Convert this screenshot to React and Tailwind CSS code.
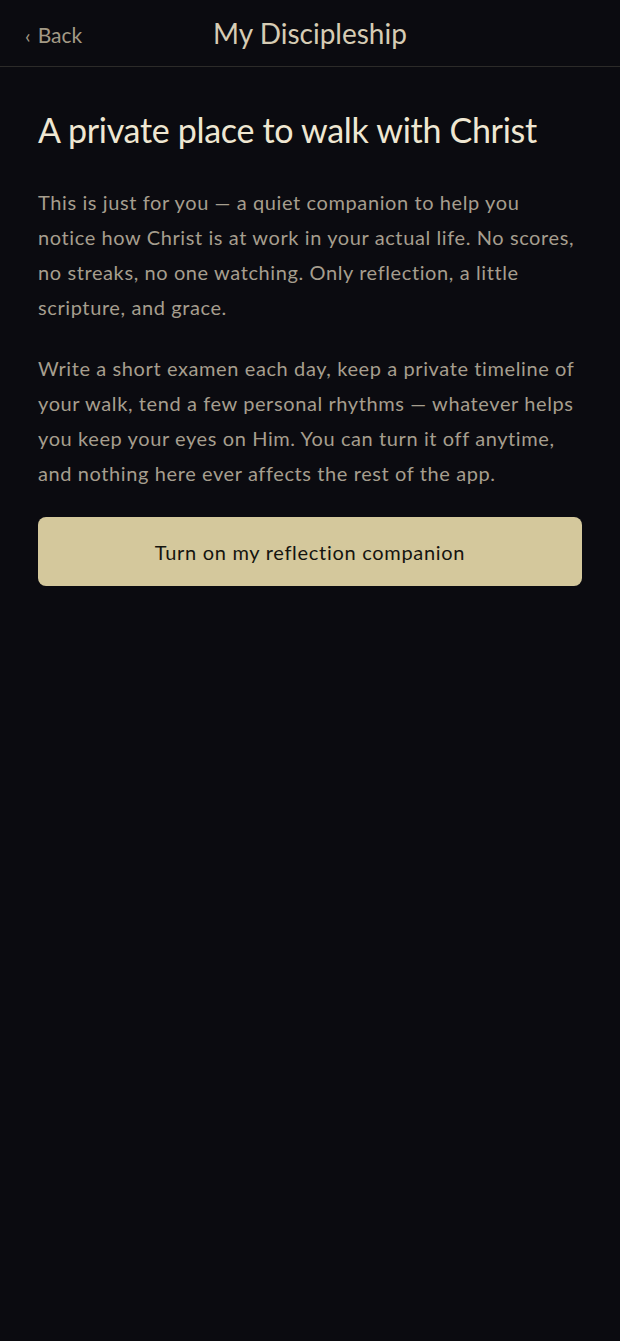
export default function App() {
  const p1 = [
    'This is just for you — a quiet companion to help you',
    'notice how Christ is at work in your actual life. No scores,',
    'no streaks, no one watching. Only reflection, a little',
    'scripture, and grace.',
  ]
  const p2 = [
    'Write a short examen each day, keep a private timeline of',
    'your walk, tend a few personal rhythms — whatever helps',
    'you keep your eyes on Him. You can turn it off anytime,',
    'and nothing here ever affects the rest of the app.',
  ]

  return (
    <div className="min-h-screen bg-[#0b0b10] font-['Lato',sans-serif]">
      {/* Header */}
      <div className="relative h-[67px] flex items-center justify-center border-b border-[#2c2b29]">
        <button className="absolute left-[25px] top-[19px] flex items-center gap-[7px] text-[21px] text-[#a39a86]">
          <span className="text-[20px]">‹</span>
          <span>Back</span>
        </button>
        <h1 className="text-[28px] text-[#d6ccb4]">My Discipleship</h1>
      </div>

      {/* Content */}
      <div className="px-[38px] pt-[40px]">
        <h2 className="text-[34px] leading-[46px] tracking-[-0.3px] text-[#efe7d2]">
          A private place to walk with Christ
        </h2>

        <p className="mt-[32px] text-[20px] leading-[35px] tracking-[0.6px] text-[#a69e8e]">
          {p1.map((l) => (
            <span key={l} className="block whitespace-nowrap">{l}</span>
          ))}
        </p>

        <p className="mt-[26px] text-[20px] leading-[35px] tracking-[0.6px] text-[#a69e8e]">
          {p2.map((l) => (
            <span key={l} className="block whitespace-nowrap">{l}</span>
          ))}
        </p>

        <button className="mt-[26px] w-full h-[69px] rounded-[8px] bg-[#d4c89c] text-[20px] tracking-[0.7px] text-[#15140f]">
          Turn on my reflection companion
        </button>
      </div>
    </div>
  )
}
